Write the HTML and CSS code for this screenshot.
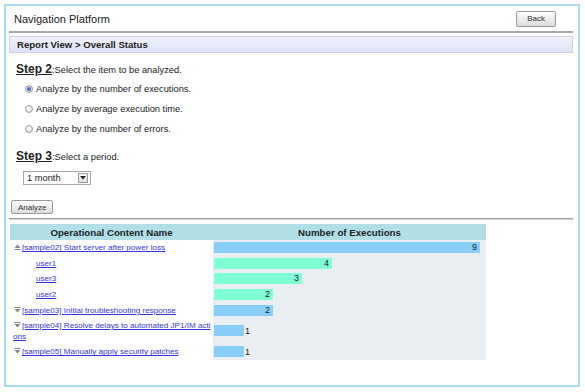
FILE: index.html
```html
<!DOCTYPE html>
<html lang="en">
<head>
    <meta charset="UTF-8">
    <title>Navigation Platform</title>
    <link rel="stylesheet" href="styles.css">
</head>
<body>
<div class="frame">
    <div class="header">
        <span class="title">Navigation Platform</span>
        <button class="btn btn-back">Back</button>
    </div>
    <div class="crumb">Report View &gt; Overall Status</div>

    <div class="step">
        <div class="step-title"><span class="step-no">Step 2</span>:Select the item to be analyzed.</div>
        <ul class="options">
            <li><input type="radio" name="item" class="radio" checked>Analyze by the number of executions.</li>
            <li><input type="radio" name="item" class="radio">Analyze by average execution time.</li>
            <li><input type="radio" name="item" class="radio">Analyze by the number of errors.</li>
        </ul>
    </div>

    <div class="step">
        <div class="step-title"><span class="step-no">Step 3</span>:Select a period.</div>
        <div class="select">
            <span>1 month</span>
            <span class="select-arrow"><svg width="6" height="4" viewBox="0 0 6 4"><polygon points="0,0 6,0 3,3.5" fill="#222"/></svg></span>
        </div>
    </div>

    <div class="actions"><button class="btn btn-analyze">Analyze</button></div>
    <div class="divider"></div>

    <div class="report">
        <div class="report-head">
            <div>Operational Content Name</div>
            <div>Number of Executions</div>
        </div>

        <div class="report-row">
            <div class="row-name"><div>
                <svg class="toggle" width="7" height="6" viewBox="0 0 7 6"><polygon points="0.5,4 3.5,0.5 6.5,4" fill="#8a8a8a"/><rect x="0.5" y="5" width="6" height="1" fill="#8a8a8a"/></svg><a href="#">[sample02] Start server after power loss</a>
            </div></div>
            <div class="row-bar"><div class="bar" style="width: 266px">9</div></div>
        </div>
        <div class="report-row">
            <div class="row-name user"><div><a href="#">user1</a></div></div>
            <div class="row-bar"><div class="bar bar-user" style="width: 118px">4</div></div>
        </div>
        <div class="report-row">
            <div class="row-name user"><div><a href="#">user3</a></div></div>
            <div class="row-bar"><div class="bar bar-user" style="width: 88px">3</div></div>
        </div>
        <div class="report-row">
            <div class="row-name user"><div><a href="#">user2</a></div></div>
            <div class="row-bar"><div class="bar bar-user" style="width: 59px">2</div></div>
        </div>
        <div class="report-row">
            <div class="row-name"><div>
                <svg class="toggle" width="7" height="6" viewBox="0 0 7 6"><rect x="0.5" y="0" width="6" height="1" fill="#8a8a8a"/><polygon points="0.5,2 6.5,2 3.5,5.5" fill="#8a8a8a"/></svg><a href="#">[sample03] Initial troubleshooting response</a>
            </div></div>
            <div class="row-bar"><div class="bar" style="width: 59px">2</div></div>
        </div>
        <div class="report-row row-tall">
            <div class="row-name"><div>
                <svg class="toggle" width="7" height="6" viewBox="0 0 7 6"><rect x="0.5" y="0" width="6" height="1" fill="#8a8a8a"/><polygon points="0.5,2 6.5,2 3.5,5.5" fill="#8a8a8a"/></svg><a href="#">[sample04] Resolve delays to automated JP1/IM actions</a>
            </div></div>
            <div class="row-bar"><div class="bar" style="width: 30px"></div><span class="bar-value">1</span></div>
        </div>
        <div class="report-row">
            <div class="row-name"><div>
                <svg class="toggle" width="7" height="6" viewBox="0 0 7 6"><rect x="0.5" y="0" width="6" height="1" fill="#8a8a8a"/><polygon points="0.5,2 6.5,2 3.5,5.5" fill="#8a8a8a"/></svg><a href="#">[sample05] Manually apply security patches</a>
            </div></div>
            <div class="row-bar"><div class="bar" style="width: 30px"></div><span class="bar-value">1</span></div>
        </div>
    </div>
</div>
</body>
</html>
```

FILE: styles.css
```css
* {
    box-sizing: border-box;
    margin: 0;
    padding: 0;
}
body {
    font-family: "Liberation Sans", Arial, sans-serif;
    color: #222;
    background: #fff;
}
.frame {
    margin: 4px 5px 0 4px;
    height: 383px;
    border: 2px solid #a9dcec;
    padding: 0 5px 0 3px;
}
.header {
    height: 27px;
    display: flex;
    align-items: center;
    justify-content: space-between;
    padding: 0 17px 0 5px;
    border-bottom: 2px solid #a8a8a8;
}
.title {
    font-size: 11px;
}
.btn {
    font-family: inherit;
    font-size: 8px;
    color: #333;
    border: 1px solid #9a9a9a;
    border-radius: 2px;
    background: linear-gradient(#fdfdfd, #dcdcdc);
}
.btn-back {
    height: 16px;
    padding: 0 10px;
}
.btn-analyze {
    height: 14px;
    padding: 0 6px;
}
.crumb {
    margin-top: 3px;
    height: 17px;
    border: 1px solid #cdd2e6;
    background: linear-gradient(#f0f1fb, #dde2f5);
    font-size: 9.6px;
    font-weight: bold;
    padding-left: 7px;
    display: flex;
    align-items: center;
}

/* steps */
.step {
    padding-left: 7px;
}
.step-title {
    margin-top: 9px;
    font-size: 9.3px;
    line-height: 14px;
}
.step + .step .step-title {
    margin-top: 10px;
}
.step-no {
    font-size: 12px;
    font-weight: bold;
    text-decoration: underline;
}
.options {
    list-style: none;
    margin-top: 2px;
    padding-left: 10px;
}
.options li {
    height: 20px;
    display: flex;
    align-items: center;
    font-size: 9.3px;
}
.radio {
    appearance: none;
    width: 8px;
    height: 8px;
    margin: 0 3px 0 -1px;
    border: 1px solid #a0a0a0;
    border-radius: 50%;
    background: radial-gradient(circle at 40% 35%, #fff, #d6d6d6);
}
.radio:checked {
    background: radial-gradient(circle, #2f62c0 0, #5d8be0 1.8px, #e4e4e4 2.6px);
}
.select {
    margin: 7px 0 0 7px;
    width: 68px;
    height: 14px;
    border: 1px solid #a5a5a5;
    display: flex;
    align-items: center;
    justify-content: space-between;
    padding: 0 2px 0 3px;
    font-size: 9.3px;
}
.select-arrow {
    width: 10px;
    height: 10px;
    border: 1px solid #9a9a9a;
    background: linear-gradient(#fafafa, #dedede);
    display: flex;
    align-items: center;
    justify-content: center;
}
.actions {
    margin-top: 15px;
    padding-left: 2px;
    display: flex;
}
.divider {
    margin-top: 4px;
    border-top: 1px solid #a0a0a0;
    border-bottom: 1px solid #d4d4d4;
}

/* report table */
.report {
    margin: 4px 0 0 1px;
    width: 476px;
}
.report-head {
    display: grid;
    grid-template-columns: 203px 273px;
    height: 16px;
    align-items: center;
    text-align: center;
    background: #b0e0e6;
    font-size: 9.7px;
    font-weight: bold;
}
.report-row {
    display: grid;
    grid-template-columns: 203px 273px;
    height: 15.6px;
}
.row-tall {
    height: 26px;
}
.row-name {
    display: flex;
    align-items: center;
    padding-left: 3px;
    font-size: 8.1px;
    line-height: 11px;
    word-break: break-all;
}
.row-name.user {
    padding-left: 26px;
}
.row-name a {
    color: #3535e0;
}
.toggle {
    margin: 0 1px;
}
.row-bar {
    display: flex;
    align-items: center;
    padding-left: 1px;
    background: #e8eef2;
}
.bar {
    height: 11px;
    background: #87cefa;
    font-size: 9px;
    line-height: 11px;
    text-align: right;
    padding-right: 3px;
}
.bar-user {
    background: #7fffd4;
}
.bar-value {
    font-size: 9px;
    margin-left: 1px;
}
```
